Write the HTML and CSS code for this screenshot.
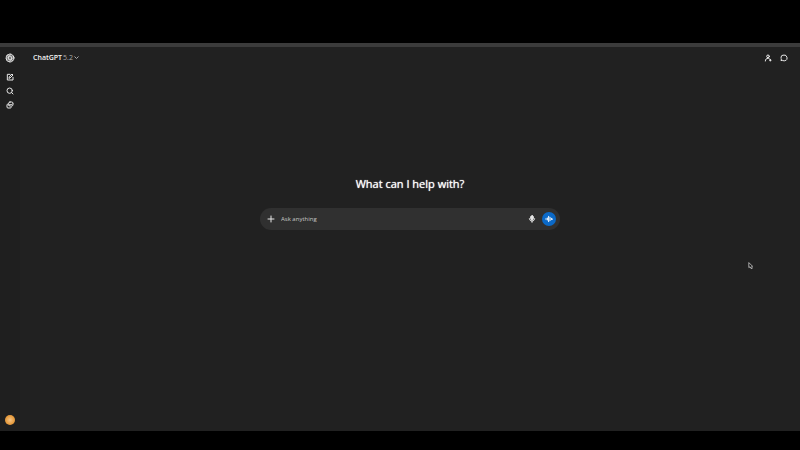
FILE: index.html
```html
<!DOCTYPE html>
<html lang="en">
<head>
<meta charset="utf-8">
<title>ChatGPT</title>
<link rel="stylesheet" href="styles.css">
</head>
<body>
<div class="window">
  <aside class="sidebar">
    <a class="logo" href="#" aria-label="Home">
      <svg class="icon" viewBox="0 0 24 24"><circle cx="12" cy="12" r="9.5"/><path d="M12 2.5a5 5 0 0 1 5 4v6l-5 3"/><path d="M12 2.5a5 5 0 0 1 5 4v6l-5 3" transform="rotate(60 12 12)"/><path d="M12 2.5a5 5 0 0 1 5 4v6l-5 3" transform="rotate(120 12 12)"/><path d="M12 2.5a5 5 0 0 1 5 4v6l-5 3" transform="rotate(180 12 12)"/><path d="M12 2.5a5 5 0 0 1 5 4v6l-5 3" transform="rotate(240 12 12)"/><path d="M12 2.5a5 5 0 0 1 5 4v6l-5 3" transform="rotate(300 12 12)"/></svg>
    </a>
    <nav class="tools">
      <button type="button" aria-label="New chat"><svg class="icon" viewBox="0 0 24 24"><path d="M12 4H4v17h17v-8M9 15l1-4 8-8 3 3-8 8z"/></svg></button>
      <button type="button" aria-label="Search"><svg class="icon" viewBox="0 0 24 24"><circle cx="11" cy="11" r="8"/><path d="m17 17 4 4"/></svg></button>
      <button type="button" aria-label="Images"><svg class="icon" viewBox="0 0 24 24"><rect x="8" y="3" width="13" height="12" rx="4"/><path d="M7 9H6a3 3 0 0 0-3 3v6a3 3 0 0 0 3 3h7a3 3 0 0 0 3-3M9 13l4-4 3 3 4-4"/></svg></button>
    </nav>
    <button class="avatar" type="button" aria-label="Account"></button>
  </aside>
  <main class="main">
    <header class="header">
      <button class="model" type="button"><strong>ChatGPT</strong> <span>5.2</span><svg class="chevron" viewBox="0 0 10 10"><path d="m1 3 4 4 4-4"/></svg></button>
      <div class="actions">
        <button type="button" aria-label="Invite people"><svg class="icon" viewBox="0 0 24 24"><circle cx="12" cy="7" r="4"/><path d="M4 21c0-5 3-8 8-8 3 0 5 1 6 3M19 16v5M17 19h4"/></svg></button>
        <button type="button" aria-label="Temporary chat"><svg class="icon" viewBox="0 0 24 24"><path d="M7 4q5-2 10 0M19 6q4 5 2 10M18 19q-5 3-10 1M6 19l-3 1 1-4M3 13q-1-4 2-8"/></svg></button>
      </div>
    </header>
    <section class="prompt">
      <h1>What can I help with?</h1>
      <form class="composer">
        <button type="button" aria-label="Add"><svg class="icon" viewBox="0 0 24 24"><path d="M12 3v18M3 12h18"/></svg></button>
        <input type="text" placeholder="Ask anything" aria-label="Ask anything">
        <button type="button" aria-label="Dictate"><svg class="icon" viewBox="0 0 24 24"><rect class="capsule" x="8" y="2" width="8" height="13" rx="4"/><path d="M4 11c0 10 16 10 16 0M12 18v4"/></svg></button>
        <button class="voice" type="button" aria-label="Voice mode"><svg class="icon" viewBox="0 0 24 24"><path d="M3 11v2M7 9v6M11 4v16M15 7v10M19 10v4M22 12v1"/></svg></button>
      </form>
    </section>
  </main>
  <svg class="cursor" viewBox="0 0 12 16" aria-hidden="true"><path d="M2 1v12l3-2 2 4h3l-1-5h2z"/></svg>
</div>
</body>
</html>
```
FILE: styles.css
```css
* { box-sizing: border-box; }

body {
  margin: 0;
  min-height: 100vh;
  display: flex;
  padding: 43px 0 19px;
  background: #000;
  color: #f3f3f3;
  font-family: "Open Sans", "Noto Sans", sans-serif;
}

button {
  display: flex;
  align-items: center;
  justify-content: center;
  padding: 0;
  border: 0;
  background: none;
  color: inherit;
  font: inherit;
}

.window {
  position: relative;
  flex: 1;
  display: flex;
  background: #212121;
  border-top: 4px solid #3b3b3b;
}

.icon {
  display: block;
  width: 8px;
  height: 8px;
  fill: none;
  stroke: #e8e8e8;
  stroke-width: 3;
  stroke-linecap: round;
  stroke-linejoin: round;
}

.sidebar {
  width: 20px;
  display: flex;
  flex-direction: column;
  align-items: center;
  padding: 6px 0;
  background: #1f1f1f;
}

.logo .icon {
  width: 10px;
  height: 10px;
  stroke-width: 2;
}

.tools {
  display: flex;
  flex-direction: column;
  gap: 6px;
  margin-top: 10px;
}

.avatar {
  width: 10px;
  height: 10px;
  margin-top: auto;
  border-radius: 50%;
  background: radial-gradient(circle, #f3bd79 10%, #e59a3d 60%);
}

.main {
  flex: 1;
  display: flex;
  flex-direction: column;
}

.header {
  display: flex;
  align-items: center;
  justify-content: space-between;
  height: 21px;
  padding: 0 12px 0 13px;
}

.model {
  gap: 1px;
  font-size: 7px;
  line-height: 10px;
}

.model strong { font-weight: 600; }

.model span { color: #aaa; }

.chevron {
  width: 5px;
  height: 5px;
  fill: none;
  stroke: #aaa;
  stroke-width: 2;
}

.actions {
  display: flex;
  gap: 8px;
}

.prompt {
  display: flex;
  flex-direction: column;
  align-items: center;
  gap: 16px;
  padding-top: 108px;
}

h1 {
  margin: 0;
  color: #fff;
  font-size: 11px;
  line-height: 16px;
  font-weight: 500;
  text-shadow: 0 0 1px #fff;
}

.composer {
  display: flex;
  align-items: center;
  gap: 6px;
  width: 100%;
  max-width: 300px;
  height: 22px;
  padding: 0 4px 0 7px;
  border-radius: 11px;
  background: #303030;
}

.composer input {
  flex: 1;
  min-width: 0;
  padding: 0;
  border: 0;
  outline: 0;
  background: none;
  color: #f3f3f3;
  font: 6px/10px "Open Sans", "Noto Sans", sans-serif;
}

.composer input::placeholder {
  color: #c8c8c8;
  opacity: 1;
}

.capsule { fill: #e4e4e4; }

.voice {
  width: 14px;
  height: 14px;
  border-radius: 50%;
  background: #0b69c7;
}

.voice .icon { stroke: #fff; }

.cursor {
  position: absolute;
  top: 56%;
  right: 47px;
  width: 5px;
  height: 7px;
  fill: #151515;
  stroke: #c8c8c8;
  stroke-width: 2;
}
```
